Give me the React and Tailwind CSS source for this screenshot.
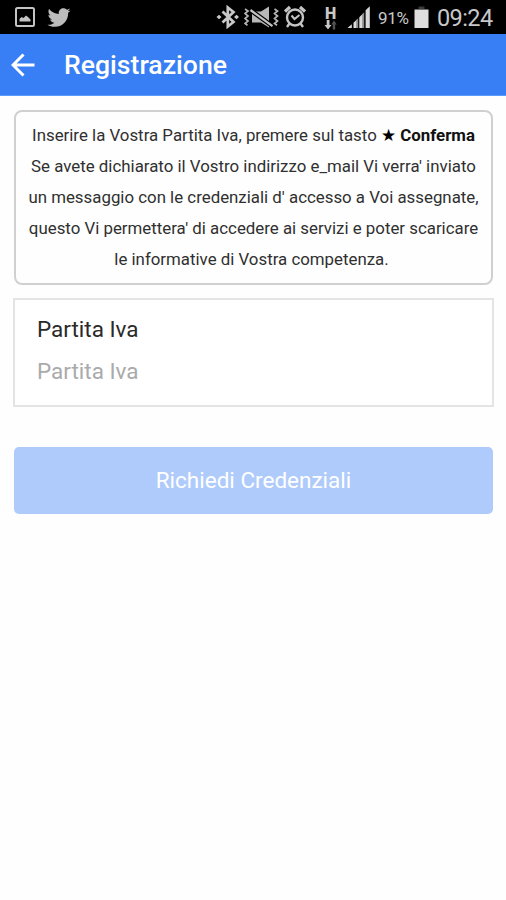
import React, { useState } from 'react';
import { FaTwitter } from 'react-icons/fa';

const PictureIcon = () => (
    <svg className="w-[20px] h-5" viewBox="0 0 20 20" fill="none">
        <rect x="1" y="1" width="18" height="18" rx="1.5" stroke="#c4c4c4" strokeWidth="2" />
        <path d="M4.5 14.5v-2.5l2-2 2 1 2.5-2.5 2 1.5 2.5 2.5v2z" fill="#c4c4c4" />
    </svg>
);

const BluetoothIcon = () => (
    <svg className="w-6 h-6" viewBox="0 0 24 24" fill="none">
        <path d="M6.5 6.5L17.5 17l-5.7 4.5v-19l5.7 4.5L6.5 17.5" stroke="#c8c8c8" strokeWidth="2.7" />
        <path d="M0.5 12l2.5-2.3 2.5 2.3L3 14.3zM18 12l2.5-2.3 2.5 2.3-2.5 2.3z" fill="#c8c8c8" />
    </svg>
);

const VibrateMuteIcon = () => (
    <svg className="w-[35px] h-6" viewBox="0 0 35 24" fill="none">
        <path d="M8 6.5h9l8-5v21l-8-5H8z" fill="#b8b8b8" />
        <path d="M5 4L29 21.5" stroke="#000" strokeWidth="4.6" />
        <path d="M6.5 5L28.5 21.2" stroke="#c4c4c4" strokeWidth="2.2" />
        <path
            d="M1 4l3 2-3 2.5 3 2.5-3 2.5 3 2.5-3 2.5 2.5 1.8M30.5 4l3 2-3 2.5 3 2.5-3 2.5 3 2.5-3 2.5 2.5 1.8"
            stroke="#b4b4b4"
            strokeWidth="1.7"
        />
    </svg>
);

const AlarmIcon = () => (
    <svg className="w-[22px] h-6" viewBox="0 0 22 24" fill="none" stroke="#c4c4c4">
        <circle cx="11" cy="12.5" r="8" strokeWidth="2.4" />
        <path d="M7.5 10.5l3 3.5 5-4" strokeWidth="2" />
        <path d="M1 6.5l5-4.5M21 6.5L16 2" strokeWidth="3.2" />
        <path d="M5.5 18.5L3 22M16.5 18.5L19 22" strokeWidth="2.4" />
    </svg>
);

const DataArrowsIcon = () => (
    <svg className="w-[13px] h-[10px]" viewBox="0 0 13 10">
        <path d="M2.7 0h2.8v5H7.5L4 9.5 0.5 5h2.2z" fill="#c8c8c8" />
        <path d="M8.8 9.5V4.5H7.3L10 0.3l2.7 4.2h-1.5v5z" fill="#505050" />
    </svg>
);

const SignalIcon = () => (
    <svg className="w-6 h-[23px]" viewBox="0 0 24 23">
        <path d="M0.5 22L4.8 18.2V22zM6.5 22v-5.3l4-3.7v9zM12.3 22V11.2l4-4V22zM18.6 22V4.2L22.8 0.3V22z" fill="#dadada" />
        <path d="M9.2 14.2l2-1.9V22h-2zM15.2 8.3l2-2V22h-2z" fill="#8e8e8e" />
    </svg>
);

const BatteryIcon = () => (
    <svg className="w-[15px] h-[23px]" viewBox="0 0 15 23">
        <path d="M4.5 0.5h6V3h-6z" fill="#3a3a3a" />
        <path d="M0.5 3.5h14v18.5H0.5z" fill="#dedede" />
    </svg>
);

const StatusBar = () => (
    <div className="flex items-center h-[34px] bg-black text-[#c8c8c8] pl-[15px]">
        <PictureIcon />
        <FaTwitter className="w-6 h-[23px] ml-3 text-[#bcbcbc]" />
        <div className="flex items-center ml-[145px]">
            <BluetoothIcon />
            <div className="ml-[4px]"><VibrateMuteIcon /></div>
            <div className="ml-[5px]"><AlarmIcon /></div>
            <div className="flex flex-col items-center ml-[18px] w-[13px] pt-[2px]">
                <span className="text-[16px] leading-[13px] font-black">H</span>
                <DataArrowsIcon />
            </div>
            <div className="ml-[10px]"><SignalIcon /></div>
            <span className="ml-[7px] w-[32px] text-[17px] tracking-[-0.3px] leading-6 pt-[2px]">91%</span>
            <div className="ml-1"><BatteryIcon /></div>
            <span className="ml-[8px] text-[23.5px] leading-6 tracking-[-0.6px] pt-[2px]">09:24</span>
        </div>
    </div>
);

const Header = () => (
    <header className="flex items-center h-[62px] bg-[#387ef5] border-b border-[#5c9bff] pl-[11px] text-white">
        <svg className="w-6 h-6" viewBox="0 0 24 24" fill="none" stroke="currentColor" strokeWidth="3">
            <path d="M23.5 12H2.5M12.5 1.5L2 12l10.5 10.5" />
        </svg>
        <h1 className="ml-[29px] text-[26.6px] leading-8 font-medium">Registrazione</h1>
    </header>
);

const App = () => {
    const [partitaIva, setPartitaIva] = useState('');

    return (
        <div className="min-h-screen bg-[#fefefe] font-['Roboto',sans-serif]">
            <StatusBar />
            <Header />
            <main className="px-[13px] pt-[14px]">
                <div className="ml-px w-[479px] h-[175px] rounded-[8px] border-2 border-[#d0d0d0] pt-[8px] text-center text-[16.85px] leading-[31px] text-[#303030] whitespace-nowrap">
                    <p>Inserire la Vostra Partita Iva, premere sul tasto <span className="font-['DejaVu_Sans'] text-black">★</span> <b className="text-[#111]">Conferma</b></p>
                    <p>Se avete dichiarato il Vostro indirizzo e_mail Vi verra' inviato</p>
                    <p>un messaggio con le credenziali d' accesso a Voi assegnate,</p>
                    <p>questo Vi permettera' di accedere ai servizi e poter scaricare</p>
                    <p className="pr-1">le informative di Vostra competenza.</p>
                </div>

                <label className="block mt-[13px] w-[481px] h-[109px] border-2 border-[#e4e4e4] bg-white pl-[22px] pt-[13px] text-[22.5px]">
                    <span className="block leading-8 text-[#2a2a2a]">Partita Iva</span>
                    <input
                        type="text"
                        value={partitaIva}
                        onChange={(e) => setPartitaIva(e.target.value)}
                        placeholder="Partita Iva"
                        className="block mt-[10px] w-full h-8 leading-8 outline-none placeholder:text-[#aaa]"
                    />
                </label>

                <button
                    disabled={!partitaIva}
                    className="block mt-10 ml-px w-[479px] h-[67px] rounded-[5px] bg-[#387ef5] disabled:bg-[#afcbfb] text-[22.5px] text-white"
                >
                    Richiedi Credenziali
                </button>
            </main>
        </div>
    );
};

export default App;
